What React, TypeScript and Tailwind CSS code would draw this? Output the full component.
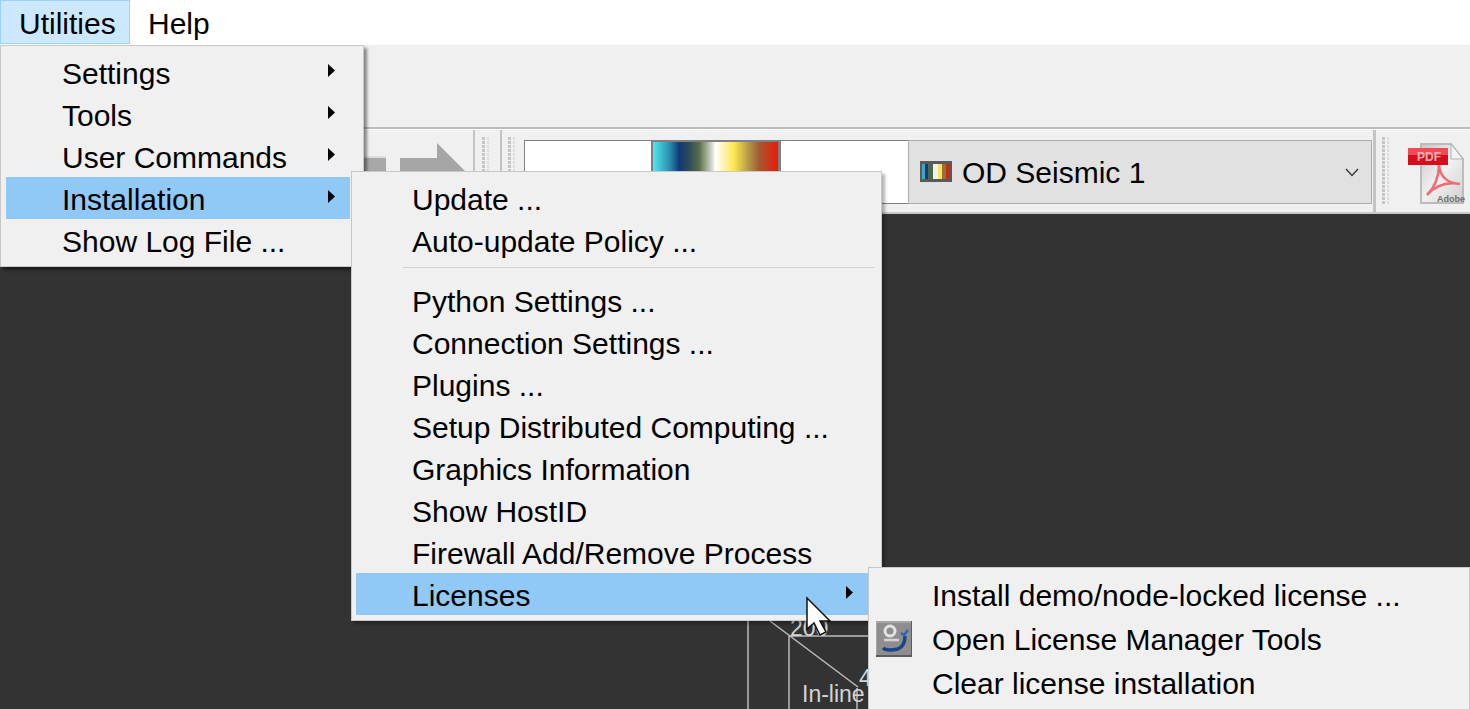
import React from "react";

const font = { fontFamily: '"Liberation Sans", Arial, sans-serif' };

function Item({ label, sub, active, h = "h-[42px]", pad = "pl-[56px]", arrow = "right-[15px]", icon }: { label: string; sub?: boolean; active?: boolean; h?: string; pad?: string; arrow?: string; icon?: React.ReactNode }) {
  return (
    <div className={`relative flex items-center whitespace-nowrap pt-[4px] ${h} ${pad} ${active ? "bg-[#90c8f6]" : ""}`}>
      {icon}
      <span>{label}</span>
      {sub && (
        <svg width="7" height="13" viewBox="0 0 7 13" className={`absolute top-[13px] ${arrow}`}>
          <path d="M0 0 L7 6.5 L0 13 Z" fill="#000" />
        </svg>
      )}
    </div>
  );
}

function Gripper() {
  return (
    <div className="grid grid-cols-[3px_2px] gap-x-[2px] gap-y-[1px] w-[7px] content-start">
      {Array.from({ length: 17 }).map((_, i) => (
        <React.Fragment key={i}>
          <div className="h-[3px] bg-[#c6c6c6]" />
          <div className="h-[3px] bg-[#dedede]" />
        </React.Fragment>
      ))}
    </div>
  );
}

function LicenseIcon() {
  return (
    <svg width="36" height="36" viewBox="0 0 36 36" className="absolute left-[7px] top-[5px]">
      <rect x="0" y="0" width="36" height="36" fill="#8e8e8e" />
      <path d="M0 35 V1 H35" fill="none" stroke="#a6a6a6" strokeWidth="2" />
      <path d="M0 35 H36 V0" fill="none" stroke="#5c5c5c" strokeWidth="2" />
      <circle cx="14" cy="10" r="5" fill="none" stroke="#e4e4e4" strokeWidth="3" />
      <path d="M8 19 H23" fill="none" stroke="#d4d4d4" strokeWidth="2.5" />
      <path d="M7 27 C10 30 17 29 22 28 C27 26 29 21 29 15" fill="none" stroke="#1a4488" strokeWidth="3.5" />
      <path d="M25 12 L28 14 L32 9" fill="none" stroke="#2a66c0" strokeWidth="2.5" />
    </svg>
  );
}

function PdfIcon() {
  return (
    <svg width="60" height="62" viewBox="0 0 60 62" className="shrink-0">
      <defs>
        <linearGradient id="paper" x1="0" y1="0" x2="1" y2="1">
          <stop offset="0" stopColor="#c8c8c8" />
          <stop offset="0.5" stopColor="#f0f0f0" />
          <stop offset="1" stopColor="#d0d0d0" />
        </linearGradient>
      </defs>
      <path d="M14 1 H44 L56 16 V60 H14 Z" fill="url(#paper)" stroke="#bcbcbc" strokeWidth="2" />
      <path d="M44 1 V16 H56 Z" fill="#f4f4f4" stroke="#b0b0b0" strokeWidth="1" />
      <rect x="1" y="5" width="40" height="17" fill="#d80c1c" />
      <rect x="1" y="5" width="40" height="7" fill="#f44a58" />
      <text x="10" y="18" fontSize="12" fontWeight="700" fill="#f3b4b4" style={font}>PDF</text>
      <path d="M20 52 C28 44 32 34 32 22 C33 34 40 40 53 41 C42 39 30 41 20 52 Z" fill="none" stroke="#ee6c74" strokeWidth="2.5" />
      <text x="30" y="59" fontSize="9" fontWeight="700" fill="#6e6e6e" style={font}>Adobe</text>
    </svg>
  );
}

export default function App() {
  return (
    <div className="relative w-[1470px] h-[709px] overflow-hidden flex flex-col bg-[#333333] text-[30px] leading-none text-black" style={font}>
      {/* menu bar */}
      <div className="flex h-[45px] bg-white shrink-0">
        <div className="w-[130px] h-[44px] bg-[#cce8ff] border border-[#99d1ff] flex items-center pl-[18px] pt-[4px]">Utilities</div>
        <div className="h-[44px] flex items-center pl-[18px] pt-[4px]">Help</div>
      </div>

      {/* upper toolbar */}
      <div className="h-[84px] bg-[#f0f0f0] border-b-[2px] border-[#bcbcbc] shrink-0" />

      {/* lower toolbar */}
      <div className="h-[85px] bg-[#f0f0f0] border-t border-white border-b-[2px] border-b-[#c8c8c8] shrink-0 flex">
        <div className="w-[364px] shrink-0" />
        <div className="w-[109px] shrink-0 pt-[13px]">
          <svg width="109" height="28" viewBox="0 0 109 28">
            <path d="M0 15 H22 V28 H0 Z" fill="#a8a8a8" />
            <path d="M0 13 H22 V15 H0 Z" fill="#dcdcdc" />
            <path d="M36 15 H73 V0 L101 28 H36 Z" fill="#a6a6a6" />
          </svg>
        </div>
        <div className="w-[2px] bg-[#c4c4c4] shrink-0" />
        <div className="pl-[7px] pt-[7px] w-[25px] shrink-0"><Gripper /></div>
        <div className="w-[2px] bg-[#c4c4c4] shrink-0" />
        <div className="pl-[6px] pt-[7px] w-[22px] shrink-0"><Gripper /></div>

        <div className="flex h-[64px] mt-[10px] shrink-0">
          <div className="w-[129px] bg-white border-y border-l border-r-2 border-[#808080]" />
          <div className="w-[125px] h-full border-t-2 border-[#808080] bg-[linear-gradient(to_right,#4fe8f0_0%,#2d8fb0_13%,#0f3a78_21%,#2f4a5a_29%,#5a6f48_37%,#c5cbc0_46%,#ffffff_50%,#fff2a0_58%,#fbe64e_65%,#b89a48_76%,#a05a30_85%,#ee1808_100%)]" />
          <div className="w-[130px] bg-white border-y border-l-[3px] border-[#808080]" />
        </div>
        <div className="relative flex items-center h-[64px] mt-[10px] w-[464px] shrink-0 bg-[#e1e1e1] border border-[#adadad] pl-[11px] pt-[2px]">
          <svg width="32" height="21" viewBox="0 0 32 21" className="mr-[10px] mt-[-4px] shrink-0">
            <rect width="32" height="21" fill="#5a5a5a" />
            <rect x="2" y="3" width="28" height="15" fill="#fff" />
            <rect x="2" y="3" width="3" height="15" fill="#3fa6c6" />
            <rect x="5" y="3" width="3" height="15" fill="#123a70" />
            <rect x="8" y="3" width="5" height="15" fill="#4f6650" />
            <rect x="13" y="3" width="5" height="15" fill="#f2f2ec" />
            <rect x="18" y="3" width="4" height="15" fill="#f8e660" />
            <rect x="22" y="3" width="4" height="15" fill="#9a7038" />
            <rect x="26" y="3" width="4" height="15" fill="#c42c14" />
          </svg>
          <span>OD Seismic 1</span>
          <svg width="14" height="9" viewBox="0 0 14 9" className="absolute right-[12px] top-[27px]">
            <path d="M1 1 L7 7.5 L13 1" fill="none" stroke="#333" strokeWidth="1.3" />
          </svg>
        </div>
        <div className="w-[3px] bg-[#c4c4c4] shrink-0 ml-[1px]" />
        <div className="pl-[6px] pt-[7px] w-[31px] shrink-0"><Gripper /></div>
        <div className="pt-[13px]"><PdfIcon /></div>
      </div>

      {/* canvas drawing, behind the menus */}
      <div className="absolute left-[740px] top-[610px] w-[130px] h-[99px] text-[#d4d4d4] text-[23px]">
        <svg width="130" height="99" viewBox="0 0 130 99" className="absolute left-0 top-0">
          <path d="M8 0 V99" stroke="#bdbdbd" strokeWidth="1.5" />
          <path d="M49 26 V99" stroke="#bdbdbd" strokeWidth="1.5" />
          <path d="M117 78 V99" stroke="#bdbdbd" strokeWidth="1.5" />
          <path d="M49 26 H130" stroke="#bdbdbd" strokeWidth="1.5" />
          <path d="M30 11 L118 77" stroke="#bdbdbd" strokeWidth="1.5" />
        </svg>
        <span className="absolute left-[50px] top-[7px]">200</span>
        <span className="absolute left-[62px] top-[73px]">In-line</span>
        <span className="absolute left-[119px] top-[57px]">4</span>
      </div>

      {/* first menu */}
      <div className="absolute left-0 top-[45px] w-[364px] h-[222px] bg-[#f0f0f0] border border-[#c8c8c8] pt-[5px] pr-[13px] pl-[5px] shadow-[3px_3px_3px_rgba(0,0,0,0.45)]">
        <Item label="Settings" sub />
        <Item label="Tools" sub />
        <Item label="User Commands" sub />
        <Item label="Installation" sub active />
        <Item label="Show Log File ..." />
      </div>

      {/* second menu */}
      <div className="absolute left-[351px] top-[171px] w-[531px] h-[450px] bg-[#f0f0f0] border border-[#c8c8c8] pt-[5px] px-[4px] shadow-[3px_3px_3px_rgba(0,0,0,0.3)]">
        <Item label="Update ..." />
        <Item label="Auto-update Policy ..." />
        <div className="h-[18px] pt-[6px] pl-[47px] pr-[3px]"><div className="h-[1px] w-full bg-[#d2d2d2]" /></div>
        <Item label="Python Settings ..." />
        <Item label="Connection Settings ..." />
        <Item label="Plugins ..." />
        <Item label="Setup Distributed Computing ..." />
        <Item label="Graphics Information" />
        <Item label="Show HostID" />
        <Item label="Firewall Add/Remove Process" />
        <Item label="Licenses" sub active arrow="right-[24px]" />
      </div>

      {/* third menu */}
      <div className="absolute left-[868px] top-[567px] w-[602px] h-[150px] bg-[#f0f0f0] border border-[#c8c8c8] pt-[4px]">
        <Item label="Install demo/node-locked license ..." h="h-[44px]" pad="pl-[63px]" />
        <Item label="Open License Manager Tools" h="h-[44px]" pad="pl-[63px]" icon={<LicenseIcon />} />
        <Item label="Clear license installation" h="h-[44px]" pad="pl-[63px]" />
      </div>

      {/* mouse pointer */}
      <svg width="30" height="42" viewBox="0 0 30 42" className="absolute left-[805px] top-[596px]">
        <path d="M2 2 V33 L9 27 L15 39 L21 36 L15 25 L25 25 Z" fill="#fff" stroke="#111" strokeWidth="1.5" strokeLinejoin="miter" />
      </svg>
    </div>
  );
}
